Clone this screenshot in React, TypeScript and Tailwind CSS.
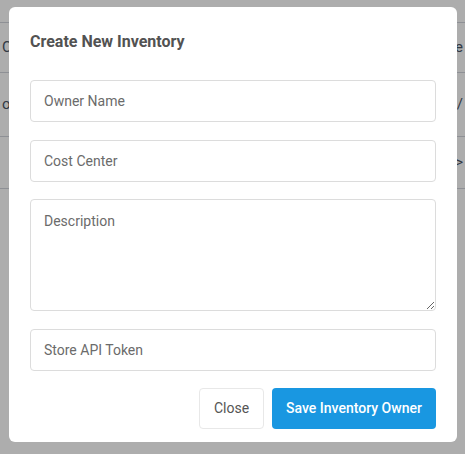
export default function App() {
  const rows = [
    { left: 'C', right: 'e' },
    { left: 'o', right: '/' },
    { left: '', right: '>' },
  ]

  return (
    <div className="relative h-[454px] w-[465px] overflow-hidden bg-white font-['Roboto',sans-serif]">
      {/* page behind the dialog */}
      <div className="flex flex-col pt-[22px]">
        <div className="border-t border-gray-300" />
        {rows.map((r, i) => (
          <div
            key={i}
            className="flex h-[50px] items-center justify-between border-b border-gray-300 px-[2px] text-[15px] text-gray-600 [&:nth-child(3)]:h-[64px] [&:nth-child(4)]:h-[52px]"
          >
            <span>{r.left}</span>
            <span>{r.right}</span>
          </div>
        ))}
      </div>

      {/* backdrop */}
      <div className="absolute inset-0 bg-black/[0.32]" />

      {/* dialog */}
      <div className="absolute left-[9px] top-[7px] flex h-[435px] w-[448px] flex-col rounded-md bg-white px-[21px] pt-[25px]">
        <h2 className="text-[16px] font-bold leading-[19px] text-[#525252]">Create New Inventory</h2>

        <div className="mt-[29px] flex flex-col">
          <input
            className="h-[42px] w-full rounded border border-[#dcdcdc] px-[13px] text-[14px] text-gray-700 outline-none placeholder:text-[#6b6b6b]"
            placeholder="Owner Name"
          />
          <input
            className="mt-[18px] h-[42px] w-full rounded border border-[#dcdcdc] px-[13px] text-[14px] text-gray-700 outline-none placeholder:text-[#6b6b6b]"
            placeholder="Cost Center"
          />
          <textarea
            className="mt-[17px] block h-[112px] w-full rounded border border-[#dcdcdc] px-[13px] py-[11px] text-[14px] text-gray-700 outline-none placeholder:text-[#6b6b6b]"
            placeholder="Description"
          />
          <input
            className="mt-[18px] h-[42px] w-full rounded border border-[#dcdcdc] px-[13px] text-[14px] text-gray-700 outline-none placeholder:text-[#6b6b6b]"
            placeholder="Store API Token"
          />
        </div>

        <div className="mt-[17px] flex justify-end gap-2">
          <button className="h-[41px] w-[65px] rounded border border-[#e8e8e8] bg-white text-[14px] text-[#555]">
            Close
          </button>
          <button className="h-[41px] w-[164px] rounded bg-[#1997e1] text-[14px] font-medium text-white">
            Save Inventory Owner
          </button>
        </div>
      </div>
    </div>
  )
}
